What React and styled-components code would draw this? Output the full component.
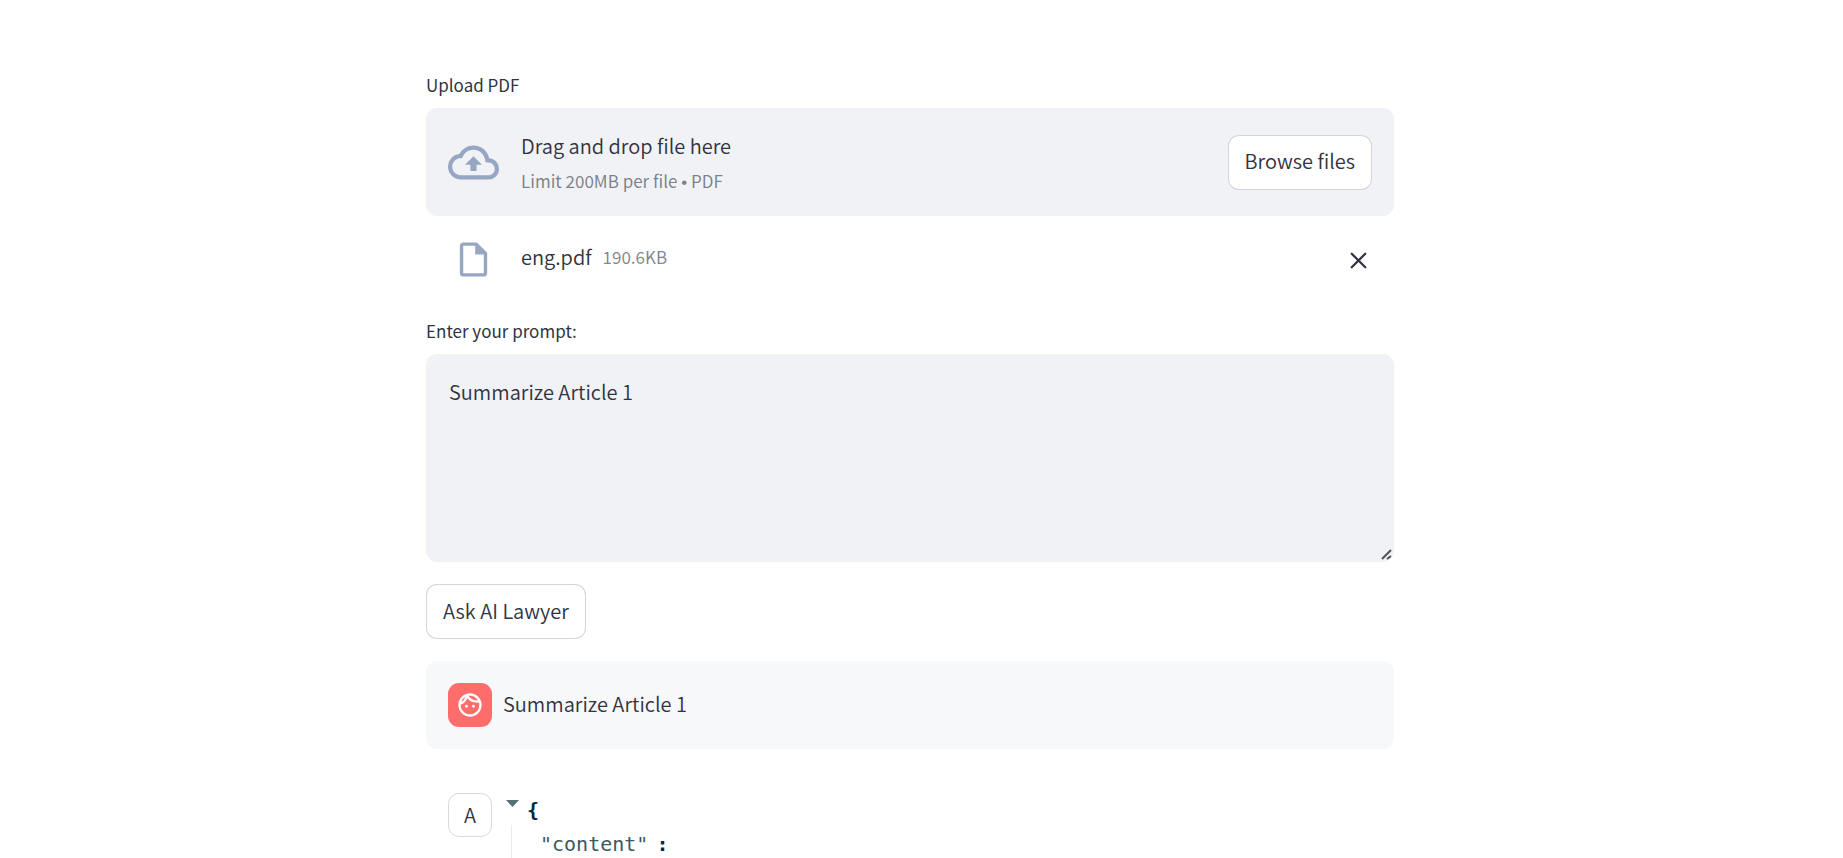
import React, { useState } from "react";
import styled, { createGlobalStyle } from "styled-components";
import { MdOutlineCloudUpload, MdOutlineInsertDriveFile, MdOutlineFace } from "react-icons/md";
import { X } from "lucide-react";

const GlobalStyle = createGlobalStyle`
  *, *::before, *::after { box-sizing: border-box; }
  body {
    margin: 0;
    background: #ffffff;
    color: #31333f;
    font-family: "Noto Sans CJK SC", "Open Sans", sans-serif;
    font-size: 20px;
    font-weight: 350;
    line-height: 32px;
  }
  button, textarea { font: inherit; color: inherit; }
`;

const Page = styled.main`
  display: flex;
  justify-content: center;
  height: 100vh;
  overflow: hidden;
  padding: 72px 23px 0 0;
`;

const Column = styled.div`
  display: flex;
  flex-direction: column;
  flex: 0 1 968px;
  min-width: 0;
`;

const Field = styled.section`
  display: flex;
  flex-direction: column;
  margin-bottom: 22px;
`;

const Label = styled.label`
  font-size: 17px;
  font-weight: 400;
  line-height: 26px;
  margin-bottom: 10px;
`;

const Dropzone = styled.div`
  display: flex;
  align-items: center;
  gap: 22px;
  padding: 22px;
  height: 108px;
  border-radius: 11px;
  background: #f0f2f6;
`;

const IconSlot = styled.span`
  display: flex;
  justify-content: center;
  width: 51px;
  flex: none;
  color: #97a6c3;
`;

const Instructions = styled.div`
  display: flex;
  flex-direction: column;
  flex: 1;
  gap: 6px;
  padding-top: 2px;
`;

const Small = styled.span`
  font-size: 17px;
  font-weight: 400;
  line-height: 26px;
  color: rgba(49, 51, 63, 0.6);
`;

const Bullet = styled.span`
  font-family: "Liberation Sans", sans-serif;
`;

const Button = styled.button`
  align-self: ${(p) => p.$align || "flex-start"};
  flex: none;
  height: 55px;
  padding: 0 16px 2px;
  border: 1px solid rgba(49, 51, 63, 0.2);
  border-radius: 11px;
  background: #ffffff;
  white-space: nowrap;
  cursor: pointer;
`;

const FileRow = styled.div`
  display: flex;
  align-items: center;
  gap: 22px;
  padding: 23px 22px 0;
  margin-bottom: 38px;
`;

const FileName = styled.div`
  display: flex;
  flex: 1;
  align-items: center;
  gap: 11px;
  padding-bottom: 6px;
`;

const IconButton = styled.button`
  display: flex;
  padding: 2px 0 0;
  border: 0;
  background: none;
  cursor: pointer;
`;

const PromptBox = styled.div`
  position: relative;
`;

const Grip = styled.svg`
  position: absolute;
  right: 2px;
  bottom: 2px;
  pointer-events: none;
`;

const Prompt = styled.textarea`
  display: block;
  width: 100%;
  height: 208px;
  padding: 22px 23px;
  border: 0;
  border-radius: 11px;
  outline: none;
  background: #f0f2f6;
  resize: vertical;
  &::-webkit-resizer { background: transparent; }
`;

const Message = styled.article`
  display: flex;
  flex: none;
  align-items: flex-start;
  gap: 11px;
  padding: 22px;
  margin-top: 22px;
  border-radius: 11px;
  background: ${(p) => (p.$user ? "#f7f8fa" : "transparent")};
`;

const Avatar = styled.div`
  display: flex;
  align-items: center;
  justify-content: center;
  width: 44px;
  height: 44px;
  flex: none;
  border-radius: 11px;
  border: ${(p) => (p.$user ? "0" : "1px solid #d5d9e0")};
  background: ${(p) => (p.$user ? "#ff6c6c" : "#ffffff")};
  color: ${(p) => (p.$user ? "#ffffff" : "#31333f")};
`;

const MessageText = styled.p`
  margin: 0;
  line-height: 42px;
`;

const JsonView = styled.div`
  flex: 1;
  font-family: "DejaVu Sans Mono", "Liberation Mono", monospace;
  line-height: 34px;
  color: #002b36;
`;

const JsonHead = styled.div`
  display: flex;
  gap: 8px;
  height: 32px;
  padding-left: 3px;
  font-weight: 700;
`;

const Toggle = styled.button`
  display: flex;
  padding: 7px 0 0;
  border: 0;
  background: none;
  color: #586e75;
  cursor: pointer;
`;

const JsonBody = styled.div`
  display: flex;
  gap: 8px;
  margin-left: 8px;
  padding: 2px 0 0 28px;
  border-left: 1px solid #ebebeb;
  min-height: 66px;
`;

const JsonKey = styled.span`
  color: #3d5961;
`;

export default function App() {
  const [prompt, setPrompt] = useState("Summarize Article 1");
  return (
    <>
      <GlobalStyle />
      <Page>
        <Column>
          <Label htmlFor="browse">Upload PDF</Label>
          <Dropzone>
            <IconSlot><MdOutlineCloudUpload size={51} /></IconSlot>
            <Instructions>
              <span>Drag and drop file here</span>
              <Small>Limit 200MB per file <Bullet>•</Bullet> PDF</Small>
            </Instructions>
            <Button id="browse" type="button" $align="center">Browse files</Button>
          </Dropzone>
          <FileRow>
            <IconSlot><MdOutlineInsertDriveFile size={41} /></IconSlot>
            <FileName>
              <span>eng.pdf</span>
              <Small>190.6KB</Small>
            </FileName>
            <IconButton type="button" aria-label="Remove file"><X size={27} /></IconButton>
          </FileRow>
          <Field>
            <Label htmlFor="prompt">Enter your prompt:</Label>
            <PromptBox>
              <Prompt id="prompt" value={prompt} onChange={(e) => setPrompt(e.target.value)} spellCheck={false} />
              <Grip width="11" height="11" viewBox="0 0 11 11" stroke="#50525a" strokeWidth="2" aria-hidden="true">
                <path d="M1 10L10 1M6 10l4-3" />
              </Grip>
            </PromptBox>
          </Field>
          <Button type="button">Ask AI Lawyer</Button>
          <Message $user>
            <Avatar $user><MdOutlineFace size={28} /></Avatar>
            <MessageText>Summarize Article 1</MessageText>
          </Message>
          <Message>
            <Avatar>A</Avatar>
            <JsonView>
              <JsonHead>
                <Toggle type="button" aria-label="Collapse">
                  <svg width="13" height="7" viewBox="0 0 13 7" fill="currentColor"><path d="M0 0h13L6.500 7z" /></svg>
                </Toggle>
                <span>{"{"}</span>
              </JsonHead>
              <JsonBody>
                <JsonKey>"content"</JsonKey>
                <b>:</b>
              </JsonBody>
            </JsonView>
          </Message>
        </Column>
      </Page>
    </>
  );
}
